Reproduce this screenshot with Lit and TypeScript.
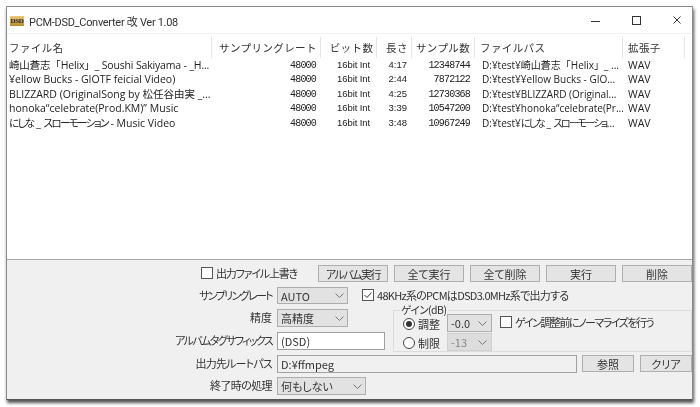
import { LitElement, html, css, svg } from "lit";
import { customElement } from "lit/decorators.js";

const k = (t: string) => html`<span class="k">${t}</span>`;
const rows: any[][] = [
  [html`<span class="fit">崎山蒼志「Helix」_ Soushi Sakiyama - _H...</span>`, "48000", "16bit Int", "4:17", "12348744", "D:¥test¥崎山蒼志「Helix」_ ...", "WAV"],
  ["¥ellow Bucks - GIOTF feicial Video)", "48000", "16bit Int", "2:44", "7872122", "D:¥test¥¥ellow Bucks - GIO...", "WAV"],
  ["BLIZZARD (OriginalSong by 松任谷由実 _...", "48000", "16bit Int", "4:25", "12730368", "D:¥test¥BLIZZARD (Original...", "WAV"],
  ["honoka“celebrate(Prod.KM)” Music", "48000", "16bit Int", "3:39", "10547200", "D:¥test¥honoka“celebrate(Pr...", "WAV"],
  [html`${k("にしな")} _ ${k("スローモーション")} - Music Video`, "48000", "16bit Int", "3:48", "10967249", html`D:¥test¥${k("にしな")} _ ${k("スローモーショ")}...`, "WAV"],
];
const heads = ["ファイル名", "サンプリングレート", "ビット数", "長さ", "サンプル数", "ファイルパス", "拡張子"];
const chev = svg`<svg class="chev" width="9" height="5" viewBox="0 0 9 5"><path d="M.5.5l4 4 4-4" fill="none" stroke="currentColor"/></svg>`;

@customElement("app-root")
export class AppRoot extends LitElement {
  static styles = css`
    :host { display: block; width: 700px; height: 407px; background: #fff; padding: 6px 7px 7px 6px; box-sizing: border-box; overflow: hidden;
      font-family: "Noto Sans CJK JP", "Liberation Sans", sans-serif; font-feature-settings: "palt"; font-size: 11px; color: #222; filter: blur(.3px); }
    .win { width: 687px; height: 394px; box-sizing: border-box; border: 1px solid #8a8a8a; border-bottom-color: #555; background: #fff; display: flex; flex-direction: column; box-shadow: 1px 3px 3px #555; }
    .title { height: 26px; flex: none; display: flex; align-items: center; gap: 11px; font: 11px Roboto, "Noto Sans CJK JP", sans-serif; letter-spacing: -.3px; font-feature-settings: "palt"; color: #333; }
    .logo { width: 14px; height: 10px; margin: 2px -6px 0 3px; background: linear-gradient(#e8c877, #b98c2e); color: #222; font: bold 7px "Liberation Serif", serif; letter-spacing: -.3px; display: flex; align-items: center; justify-content: center; }
    .name { flex: 1; padding-top: 1px; }
    .cap { width: 30px; height: 26px; display: flex; align-items: center; justify-content: center; }
    .list { flex: 1; border-top: 1px solid #f0f0f0; padding-top: 3px; }
    .grid { display: grid; grid-template-columns: 205px 109px 56px 35px 63px 148px 62px; }
    .h { height: 21px; border-right: 1px solid #e5e5e5; box-sizing: border-box; display: flex; align-items: center; justify-content: center; font-size: 10.5px; letter-spacing: .4px; font-feature-settings: normal; white-space: nowrap; color: #333; }
    .h.n { padding-left: 4px; }
    .h.b { padding-left: 6px; }
    .h.l { justify-content: flex-start; padding-left: 2px; }
    .h.p { padding-left: 5px; }
    .c { height: 14.4px; line-height: 14.6px; font-size: 10.5px; white-space: nowrap; overflow: hidden; color: #222; font-feature-settings: normal; }
    .c0 { padding-left: 2px; font-family: "Open Sans", "Noto Sans CJK JP", sans-serif; }
    .fit { letter-spacing: -.16px; }
    .r { text-align: right; font-family: "Liberation Mono", monospace; font-size: 10px; letter-spacing: -.8px; }
    .c1 { padding-right: 5px; line-height: 16px; }
    .c2 { padding-right: 7px; font-family: "Liberation Sans", sans-serif; letter-spacing: -.1px; font-size: 9.5px; }
    .c3 { padding-right: 5px; font-family: "Liberation Sans", sans-serif; font-size: 9.5px; letter-spacing: 0; }
    .c4 { padding-right: 5px; line-height: 16px; }
    .c5 { padding-left: 7px; font-size: 10px; font-family: "Open Sans", "Noto Sans CJK JP", sans-serif; }
    .c6 { padding-left: 5px; font-family: "Open Sans", sans-serif; }
    .k { letter-spacing: -1.6px; font-feature-settings: "palt"; }
    .panel { height: 140px; flex: none; box-sizing: border-box; background: #f0f0f0; border-top: 1px solid #a6a6a6; padding: 5px 0 0; }
    .top { display: flex; height: 22px; align-items: flex-start; padding-left: 194px; gap: 6px; }
    .top .ow { width: 111px; flex: none; }
    .top .btn { width: 70px; }
    .btn { height: 17px; box-sizing: border-box; border: 1px solid #aeaeae; background: #e4e4e4; display: flex; align-items: center; justify-content: center; font-size: 11px; color: #333; flex: none; }
    .tight { letter-spacing: -1.5px; }
    .form { display: grid; grid-template-columns: 265px 108px 299px; column-gap: 5px; grid-template-rows: 22px 23px 23px 22px 20px; }
    .lab { grid-column: 1; text-align: right; line-height: 17px; font-size: 11px; color: #333; white-space: nowrap; }
    .t1 { letter-spacing: -1.65px; } .t2 { letter-spacing: -.8px; } .t3 { letter-spacing: -.6px; }
    .sel { height: 18px; box-sizing: border-box; border: 1px solid #adadad; background: #e2e2e2; display: flex; align-items: center; justify-content: space-between; padding: 0 3px 0 3px; font-size: 11px; color: #333; }
    .s71 { width: 71px; } .s89 { width: 89px; } .short { height: 17px; }
    .chev { color: #777; flex: none; }
    .inp { height: 18px; box-sizing: border-box; border: 1px solid #a0a0a0; background: #fff; padding: 0 3px; display: flex; align-items: center; font-size: 11px; color: #333; }
    .ck { display: flex; align-items: center; gap: 3px; height: 16px; white-space: nowrap; color: #333; }
    .box { width: 10px; height: 10px; border: 1px solid #555; background: #fff; flex: none; display: block; }
    .box svg { display: block; }
    .mid { grid-column: 3; grid-row: 1; margin-left: -28px; letter-spacing: -.72px; line-height: 12px; height: 12px; margin-top: 2px; }
    .ow span:last-child { letter-spacing: -1.2px; }
    .group { grid-column: 3; grid-row: 2 / 4; width: 299px; height: 42px; box-sizing: border-box; border: 1px solid #dcdcdc; position: relative; display: grid; grid-template-columns: 44px 45px 1fr; grid-template-rows: 19px 19px; padding: 3px 0 0 9px; margin: 1px 0 0 3px; }
    .legend { position: absolute; left: 6px; top: -6px; background: #f0f0f0; font-size: 10.5px; line-height: 9px; padding: 0 1px; color: #333; letter-spacing: -.5px; }
    .radio { display: flex; align-items: center; gap: 3px; color: #333; }
    .dot { width: 10px; height: 10px; border-radius: 50%; border: 1px solid #444; background: #fff; flex: none; display: flex; align-items: center; justify-content: center; }
    .dot i { width: 6px; height: 6px; border-radius: 50%; background: #333; }
    .group .sel { padding-right: 4px; }
    .dis { background: #ddd; color: #888; border-color: #d0d0d0; }
    .gck { margin-left: 8px; }
    .gck span:last-child { letter-spacing: -1.5px; }
    .wide { grid-column: 2 / 4; display: flex; gap: 5px; }
    .wide .inp { width: 300px; flex: none; background: #f0f0f0; }
    .wide .btn { width: 52px; }
    .wide .btn + .btn { margin-left: 1px; }
  `;

  render() {
    const headClass = (i: number) =>
      i === 0 ? "l" : i === 5 ? "l p" : i === 6 ? "l p" : i === 1 ? "n" : i === 2 || i === 3 ? "b" : "";
    return html`<div class="win">
      <div class="title">
        <span class="logo">DSD</span><span class="name">PCM-DSD_Converter 改 Ver 1.08</span>
        <span class="cap"><svg width="9" height="9"><path d="M0 5.5h9" stroke="#333"/></svg></span>
        <span class="cap"><svg width="9" height="9"><rect x=".5" y=".5" width="8" height="8" fill="none" stroke="#333"/></svg></span>
        <span class="cap"><svg width="8" height="8"><path d="M.5.5l7 7M7.5.5l-7 7" fill="none" stroke="#333"/></svg></span>
      </div>
      <div class="list">
        <div class="grid">
          ${heads.map((h, i) => html`<div class="h ${headClass(i)}">${h}</div>`)}
          ${rows.map((r) => r.map((v, i) => html`<div class="c c${i} ${i >= 1 && i <= 4 ? "r" : ""}">${v}</div>`))}
        </div>
      </div>
      <div class="panel">
        <div class="top">
          <label class="ck ow"><span class="box"></span><span>出力ファイル上書き</span></label>
          <span class="btn"><span class="tight">アルバム実行</span></span><span class="btn">全て実行</span><span class="btn">全て削除</span><span class="btn">実行</span><span class="btn">削除</span>
        </div>
        <div class="form">
          <div class="lab t1">サンプリングレート</div>
          <div class="sel s71 short">AUTO ${chev}</div>
          <div class="ck mid"><span class="box"><svg width="10" height="10"><path d="M1.5 5l2.5 2.5 4.5-5" fill="none" stroke="#333"/></svg></span>48KHz系のPCMはDSD3.0MHz系で出力する</div>
          <div class="lab">精度</div>
          <div class="sel s71">高精度 ${chev}</div>
          <div class="group">
            <span class="legend">ゲイン(dB)</span>
            <div class="radio"><span class="dot"><i></i></span>調整</div>
            <div class="sel">-0.0 ${chev}</div>
            <div class="ck gck"><span class="box"></span><span>ゲイン調整前にノーマライズを行う</span></div>
            <div class="radio"><span class="dot"></span>制限</div>
            <div class="sel dis">-13 ${chev}</div>
          </div>
          <div class="lab t1">アルバムタグサフィックス</div>
          <div class="inp">(DSD)</div>
          <div class="lab t2">出力先ルートパス</div>
          <div class="wide"><div class="inp">D:¥ffmpeg</div><span class="btn">参照</span><span class="btn">クリア</span></div>
          <div class="lab t3">終了時の処理</div>
          <div class="sel s89">何もしない ${chev}</div>
        </div>
      </div>
    </div>`;
  }
}
